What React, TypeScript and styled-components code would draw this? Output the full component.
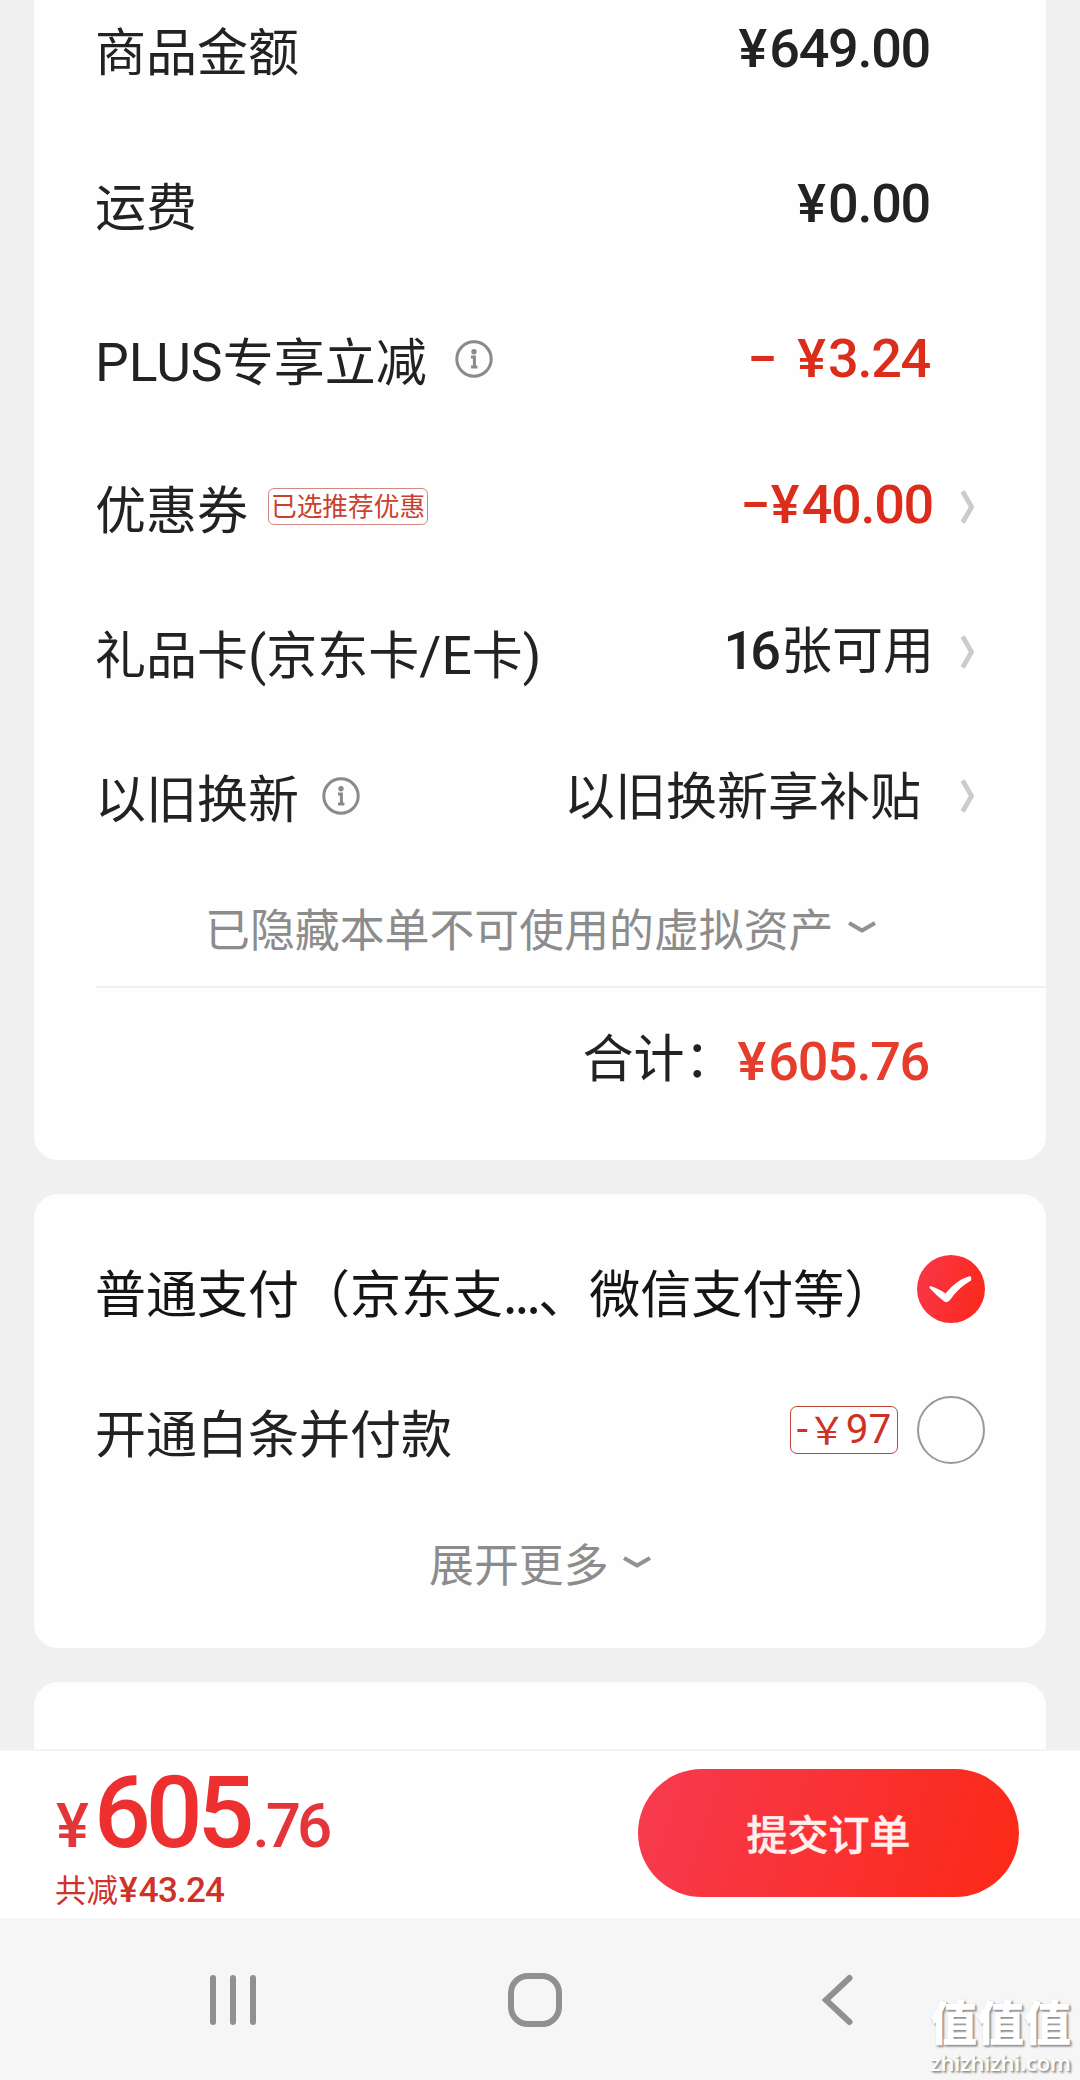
import React from "react";
import styled, { createGlobalStyle } from "styled-components";

const cjk = `"Noto Sans CJK SC", "Noto Sans", sans-serif`;
const numeric = `Roboto, "Noto Sans CJK SC", sans-serif`;

const GlobalStyle = createGlobalStyle`
  html, body { margin: 0; padding: 0; background: #f0f0f0; }
  * { box-sizing: border-box; }
`;

const Screen = styled.div`
  position: relative;
  width: 1080px;
  height: 2080px;
  overflow: hidden;
  display: flex;
  flex-direction: column;
  background: #f0f0f0;
  color: #222;
  font-family: ${cjk};
`;

const Scroll = styled.main`
  height: 1749px;
  flex: none;
  overflow: hidden;
  padding: 0 34px;
  display: flex;
  flex-direction: column;
  gap: 34px;
`;

const Card = styled.section<{ $h: number; $first?: boolean }>`
  flex: none;
  height: ${(p) => p.$h}px;
  padding-left: 61px;
  background: #fefefe;
  border-radius: ${(p) => (p.$first ? "0 0 24px 24px" : "24px")};
  overflow: hidden;
`;

const FeeList = styled.div`
  margin-top: -29px;
`;

const AssetList = styled.div`
  margin-top: -2px;
`;

const Row = styled.div<{ $h: number }>`
  height: ${(p) => p.$h}px;
  display: flex;
  align-items: center;
`;

const Label = styled.div`
  flex: 1;
  display: flex;
  align-items: center;
  font-size: 51px;
  line-height: 74px;
  white-space: nowrap;
`;

const LabelText = styled.span`
  display: block;
`;

const Latin = styled.span`
  font-family: ${numeric};
  font-size: 53.5px;
  line-height: 1;
`;

const Value = styled.div<{ $red?: boolean; $lift?: number; $end?: number }>`
  font-family: ${numeric};
  font-size: 54px;
  font-weight: 500;
  line-height: 64px;
  letter-spacing: -1.3px;
  white-space: pre;
  color: ${(p) => (p.$red ? "#dc2c1c" : "#222")};
  padding-bottom: ${(p) => p.$lift ?? 0}px;
  margin-right: ${(p) => p.$end ?? 0}px;
`;

const Yen = styled.span<{ $gap?: number }>`
  margin-right: ${(p) => p.$gap ?? 3.5}px;
`;

const Minus = styled.span<{ $gap: number }>`
  display: inline-block;
  transform: translateY(-2px) scaleX(1.6);
  margin-right: ${(p) => p.$gap}px;
`;

const Count = styled.span`
  letter-spacing: -4px;
  margin-right: 4px;
`;

const PlainText = styled.span`
  font-family: ${cjk};
  font-size: 51px;
  font-weight: 400;
  letter-spacing: 0;
`;

const Trail = styled.div`
  width: 117px;
  flex: none;
  display: flex;
  padding-left: 31px;
`;

const InfoSvg = styled.svg<{ $gap: number }>`
  width: 38px;
  height: 38px;
  margin-left: ${(p) => p.$gap}px;
`;

const CouponTag = styled.span`
  width: 160px;
  height: 37px;
  margin-left: 20px;
  display: flex;
  justify-content: center;
  align-items: center;
  padding-bottom: 4px;
  border: 1px solid #d08a82;
  border-radius: 6px;
  color: #c9402f;
  font-size: 25.7px;
  line-height: 30px;
`;

const MoreLink = styled.div<{ $h: number; $shift: number }>`
  height: ${(p) => p.$h}px;
  display: flex;
  align-items: center;
  padding-left: ${(p) => p.$shift}px;
  color: #8c8c8c;
  font-size: 44.9px;
  line-height: 65px;
  white-space: nowrap;
`;

const DownSvg = styled.svg<{ $gap: number }>`
  width: 28px;
  height: 14px;
  margin-left: ${(p) => p.$gap}px;
`;

const Divider = styled.div`
  height: 2px;
  margin-left: 1px;
  background: #f0f0f0;
`;

const TotalRow = styled.div`
  height: 133px;
  display: flex;
  justify-content: flex-end;
  align-items: center;
  padding-right: 117px;
  font-size: 51px;
  line-height: 74px;
`;

const TotalPrice = styled.span`
  font-family: ${numeric};
  font-size: 54px;
  font-weight: 500;
  line-height: 64px;
  letter-spacing: -1.3px;
  padding-top: 14px;
  margin-left: 2px;
  color: #e63c2c;
`;

const PayList = styled.div`
  padding-top: 24px;
`;

const PayRow = styled.div`
  height: 141px;
  display: flex;
  align-items: center;
  padding-right: 61px;
`;

const PayName = styled(Label)<{ $drop?: number; $dark?: boolean }>`
  padding-top: ${(p) => p.$drop ?? 0}px;
  color: ${(p) => (p.$dark ? "#151515" : "#222")};
`;

const Dots = styled.span`
  letter-spacing: -2.4px;
`;

const Discount = styled.span`
  width: 108px;
  height: 48px;
  margin-right: 19px;
  display: flex;
  align-items: center;
  justify-content: center;
  padding-bottom: 1px;
  border: 1.5px solid #c0453a;
  border-radius: 7px;
  color: #cc3224;
  font-family: ${numeric};
  font-size: 40.5px;
  line-height: 46px;
  white-space: nowrap;
`;

const WideYen = styled.span`
  font-family: ${cjk};
  font-size: 38px;
  line-height: 36px;
  padding-bottom: 3px;
`;

const RadioSvg = styled.svg`
  width: 68px;
  height: 68px;
  flex: none;
`;

const CheckoutBar = styled.footer`
  flex: none;
  height: 169px;
  border-top: 2px solid #f4f4f4;
  background: #fff;
  display: flex;
  justify-content: space-between;
  padding: 18px 61px 0 56px;
`;

const Summary = styled.div`
  display: flex;
  flex-direction: column;
  font-family: ${numeric};
  font-weight: 500;
`;

const Amount = styled.div`
  height: 99px;
  display: flex;
  align-items: baseline;
  line-height: 88px;
  font-size: 62px;
  letter-spacing: -4px;
  color: #e2363b;
`;

const AmountMain = styled.span`
  font-size: 100px;
  letter-spacing: -5px;
  margin-right: 3px;
  color: #ee2f30;
`;

const Saved = styled.div`
  height: 40px;
  display: flex;
  align-items: baseline;
  line-height: 40px;
  font-size: 35px;
  letter-spacing: -0.8px;
  color: #d03228;
`;

const SavedLabel = styled.span`
  font-family: ${cjk};
  font-weight: 400;
  font-size: 31.5px;
  letter-spacing: 0;
  margin-left: -1px;
  margin-right: 1px;
`;

const Submit = styled.button`
  width: 381px;
  height: 128px;
  border: 0;
  padding: 0 0 2px;
  border-radius: 64px;
  background: linear-gradient(108deg, #f73a4e 5%, #fb2a1a 92%);
  color: #fff0ee;
  font-family: ${cjk};
  font-weight: 500;
  font-size: 41px;
  line-height: 60px;
  -webkit-text-stroke: 0.5px #fff0ee;
`;

const NavBar = styled.nav`
  flex: 1;
  background: #f6f6f6;
  display: grid;
  grid-template-columns: 303px 303px 303px;
  justify-content: center;
  padding: 2px 11px 0 0;
  align-items: center;
  justify-items: center;
`;

const NavSvg = styled.svg`
  width: 60px;
  height: 60px;
  fill: none;
  stroke: #909090;
  stroke-width: 6;
  stroke-linecap: round;
`;

const Watermark = styled.div`
  position: absolute;
  right: 8px;
  bottom: 4px;
  width: 143px;
  display: flex;
  flex-direction: column;
  align-items: center;
  gap: 4px;
  color: #fff;
  text-shadow: 1px 1px 2px #8a8a8a, 2px 2px 2px #b0b0b0;
  white-space: nowrap;
`;

const MarkName = styled.div`
  font-size: 47px;
  font-weight: 900;
  line-height: 48px;
`;

const MarkSite = styled.div`
  font-family: "Open Sans", sans-serif;
  font-size: 22px;
  font-weight: 600;
  line-height: 28px;
  letter-spacing: -0.2px;
`;

const Info = ({ gap }: { gap: number }) => (
  <InfoSvg $gap={gap} viewBox="0 0 38 38" fill="none" stroke="#8a8a8a">
    <circle cx="19" cy="19" r="17.2" strokeWidth="3" />
    <circle cx="19" cy="11.8" r="2.7" fill="#8a8a8a" stroke="none" />
    <path d="M16 17h3.4v10M16 27h6.4" strokeWidth="3" />
  </InfoSvg>
);

const Arrow = () => (
  <svg width="15" height="36" viewBox="0 0 15 36" fill="none">
    <path d="M2.600 2.500L11.600 18L2.600 33.500" stroke="#cbcbcb" strokeWidth="4.8" strokeLinejoin="round" />
  </svg>
);

const Down = ({ gap }: { gap: number }) => (
  <DownSvg $gap={gap} viewBox="0 0 28 14" fill="none">
    <path d="M1 3L14 10.500L27 3" stroke="#929292" strokeWidth="4.2" strokeLinejoin="round" />
  </DownSvg>
);

export default function App() {
  return (
    <>
      <GlobalStyle />
      <Screen>
        <Scroll>
          <Card $h={1160} $first>
            <FeeList>
              <Row $h={155}>
                <Label>商品金额</Label>
                <Value $end={-1}>
                  <Yen>¥</Yen>649.00
                </Value>
                <Trail />
              </Row>
              <Row $h={155}>
                <Label>运费</Label>
                <Value $end={-1}>
                  <Yen>¥</Yen>0.00
                </Value>
                <Trail />
              </Row>
              <Row $h={155}>
                <Label>
                  <LabelText>
                    <Latin>PLUS</Latin>专享立减
                  </LabelText>
                  <Info gap={28} />
                </Label>
                <Value $red $end={-1}>
                  <Minus $gap={15}>-</Minus> <Yen>¥</Yen>3.24
                </Value>
                <Trail />
              </Row>
            </FeeList>
            <AssetList>
              <Row $h={145}>
                <Label>
                  优惠券
                  <CouponTag>已选推荐优惠</CouponTag>
                </Label>
                <Value $red $lift={3} $end={-4}>
                  <Minus $gap={8}>-</Minus>
                  <Yen>¥</Yen>40.00
                </Value>
                <Trail>
                  <Arrow />
                </Trail>
              </Row>
              <Row $h={145}>
                <Label>
                  <LabelText>
                    礼品卡<Latin>(</Latin>京东卡<Latin>/E</Latin>卡<Latin>)</Latin>
                  </LabelText>
                </Label>
                <Value $lift={6} $end={-5}>
                  <Count>16</Count>
                  <PlainText>张可用</PlainText>
                </Value>
                <Trail>
                  <Arrow />
                </Trail>
              </Row>
              <Row $h={144}>
                <Label>
                  以旧换新
                  <Info gap={23} />
                </Label>
                <Value $lift={3} $end={8}>
                  <PlainText>以旧换新享补贴</PlainText>
                </Value>
                <Trail>
                  <Arrow />
                </Trail>
              </Row>
            </AssetList>
            <MoreLink $h={118} $shift={110}>
              已隐藏本单不可使用的虚拟资产
              <Down gap={15} />
            </MoreLink>
            <Divider />
            <TotalRow>
              合计：
              <TotalPrice>
                <Yen>¥</Yen>605.76
              </TotalPrice>
            </TotalRow>
          </Card>

          <Card $h={454}>
            <PayList>
              <PayRow>
                <PayName $dark $drop={5}>
                  普通支付（京东支<Dots>...</Dots>、微信支付等）
                </PayName>
                <RadioSvg viewBox="0 0 68 68">
                  <defs>
                    <linearGradient id="checked" x1="0" y1="0" x2="1" y2="0.3">
                      <stop offset="0" stopColor="#f9374a" />
                      <stop offset="1" stopColor="#fb2a20" />
                    </linearGradient>
                  </defs>
                  <circle cx="34" cy="34" r="34" fill="url(#checked)" />
                  <path
                    d="M13 31Q21 33 28.500 38.500Q39 25 53 21Q55 22 54 25.500Q41 33 33 45Q29.500 49 26 45.500Q19 40 13.500 34Q11.500 31.500 13 31Z"
                    fill="#fff"
                  />
                </RadioSvg>
              </PayRow>
              <PayRow>
                <PayName $drop={2}>开通白条并付款</PayName>
                <Discount>
                  -<WideYen>￥</WideYen>97
                </Discount>
                <RadioSvg viewBox="0 0 68 68">
                  <circle cx="34" cy="34" r="33" fill="none" stroke="#999" strokeWidth="2" />
                </RadioSvg>
              </PayRow>
            </PayList>
            <MoreLink $h={124} $shift={334}>
              展开更多
              <Down gap={14} />
            </MoreLink>
          </Card>

          <Card $h={200} />
        </Scroll>

        <CheckoutBar>
          <Summary>
            <Amount>
              <Yen $gap={9}>¥</Yen>
              <AmountMain>605</AmountMain>.76
            </Amount>
            <Saved>
              <SavedLabel>共减</SavedLabel>
              <Yen $gap={2}>¥</Yen>43.24
            </Saved>
          </Summary>
          <Submit>提交订单</Submit>
        </CheckoutBar>

        <NavBar>
          <NavSvg viewBox="0 0 60 60">
            <path d="M11 8v44M31 8v44M51 8v44" />
          </NavSvg>
          <NavSvg viewBox="0 0 60 60">
            <rect x="6" y="6" width="48" height="48" rx="17" />
          </NavSvg>
          <NavSvg viewBox="0 0 60 60" strokeLinejoin="miter">
            <path d="M41.500 8L18 30L41.500 52" />
          </NavSvg>
        </NavBar>

        <Watermark>
          <MarkName>值值值</MarkName>
          <MarkSite>zhizhizhi.com</MarkSite>
        </Watermark>
      </Screen>
    </>
  );
}
